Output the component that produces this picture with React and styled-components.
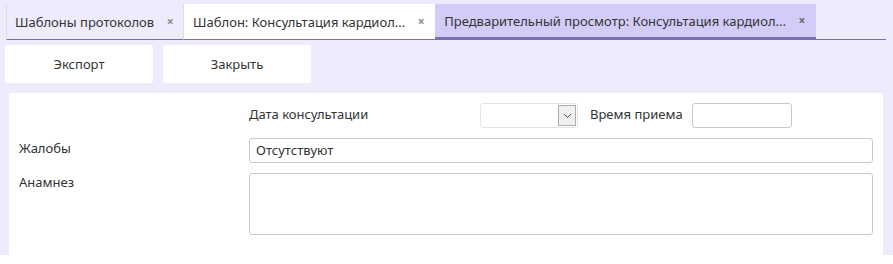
import React from "react";
import styled, { createGlobalStyle, css } from "styled-components";

const Global = createGlobalStyle`
  html, body { margin: 0; padding: 0; background: #ffffff; }
  body { font-family: "Noto Sans", "Open Sans", sans-serif; font-size: 13px; color: #333333; }
`;

const Page = styled.div`
  height: 255px;
  background: #eeecfc;
  display: flex;
  flex-direction: column;
  box-sizing: border-box;
  padding-top: 4px;
`;

const TabBar = styled.div`
  display: flex;
  margin: 0 7px 0 6px;
  height: 35px;
  border-bottom: 1px solid #7b6dae;
`;

const Tab = styled.div`
  height: 36px;
  box-sizing: border-box;
  display: flex;
  align-items: center;
  gap: 12px;
  padding: 1px 10px 0 9px;
  white-space: nowrap;
  margin-bottom: -1px;
  border-bottom: 1px solid #7b6dae;
  ${(p) =>
    p.$variant === "plain" &&
    css`
      background: #eeecfc;
      padding-left: 8px;
      padding-right: 9px;
      border-left: 1px solid #dcdbe8;
      border-right: 1px solid #dcdbe8;
    `}
  ${(p) =>
    p.$variant === "white" &&
    css`
      background: #ffffff;
    `}
  ${(p) =>
    p.$variant === "active" &&
    css`
      background: #d4ccf8;
      border-bottom: 3px solid #7b6dae;
      padding-bottom: 0;
    `}
`;

const Close = styled.span`
  width: 8px;
  text-align: center;
  font-size: 12px;
  color: ${(p) => (p.$dark ? "#666666" : "#888888")};
  font-weight: bold;
  line-height: 1;
`;

const Toolbar = styled.div`
  display: flex;
  gap: 10px;
  padding: 5px 0 0 5px;
`;

const Button = styled.div`
  width: 148px;
  height: 38px;
  background: #ffffff;
  border-radius: 3px;
  display: flex;
  align-items: center;
  justify-content: center;
`;

const Panel = styled.div`
  flex: 1;
  margin: 10px 10px 0 9px;
  background: #ffffff;
  border-radius: 3px 3px 0 0;
  padding: 10px 10px 0 10px;
  display: grid;
  grid-template-columns: 230px 1fr;
  grid-auto-rows: min-content;
  row-gap: 10px;
`;

const Label = styled.div`
  padding-top: ${(p) => p.$top || 0}px;
  line-height: 18px;
`;

const FieldRow = styled.div`
  display: flex;
  align-items: center;
`;

const InlineLabel = styled.div`
  width: ${(p) => p.$w}px;
  padding-bottom: 4px;
`;

const Combo = styled.div`
  width: 98px;
  height: 25px;
  box-sizing: border-box;
  border: 1px solid #e4e4e4;
  border-radius: 3px;
  display: flex;
  justify-content: flex-end;
  padding: 1px;
  margin-right: 12px;
`;

const ComboButton = styled.div`
  width: 16px;
  background: #f0f0f0;
  border: 1px solid #adadad;
  display: flex;
  align-items: center;
  justify-content: center;
`;

const Input = styled.div`
  width: ${(p) => (p.$w ? `${p.$w}px` : "auto")};
  height: ${(p) => p.$h || 25}px;
  box-sizing: border-box;
  border: 1px solid #c8c8c8;
  border-radius: 3px;
  padding: 2px 6px;
  line-height: 19px;
`;

export default function App() {
  return (
    <>
      <Global />
      <Page>
        <TabBar>
          <Tab $variant="plain">
            Шаблоны протоколов <Close>×</Close>
          </Tab>
          <Tab $variant="white">
            Шаблон: Консультация кардиол... <Close>×</Close>
          </Tab>
          <Tab $variant="active">
            Предварительный просмотр: Консультация кардиол... <Close $dark>×</Close>
          </Tab>
        </TabBar>
        <Toolbar>
          <Button>Экспорт</Button>
          <Button>Закрыть</Button>
        </Toolbar>
        <Panel>
          <div />
          <FieldRow>
            <InlineLabel $w={231}>Дата консультации</InlineLabel>
            <Combo>
              <ComboButton>
                <svg width="9" height="6" viewBox="0 0 9 6">
                  <path d="M1 1 L4.5 4.5 L8 1" fill="none" stroke="#555" strokeWidth="1" />
                </svg>
              </ComboButton>
            </Combo>
            <InlineLabel $w={102}>Время приема</InlineLabel>
            <Input $w={100} />
          </FieldRow>
          <Label $top={1}>Жалобы</Label>
          <Input>Отсутствуют</Input>
          <Label $top={0}>Анамнез</Label>
          <Input $h={62} />
        </Panel>
      </Page>
    </>
  );
}
